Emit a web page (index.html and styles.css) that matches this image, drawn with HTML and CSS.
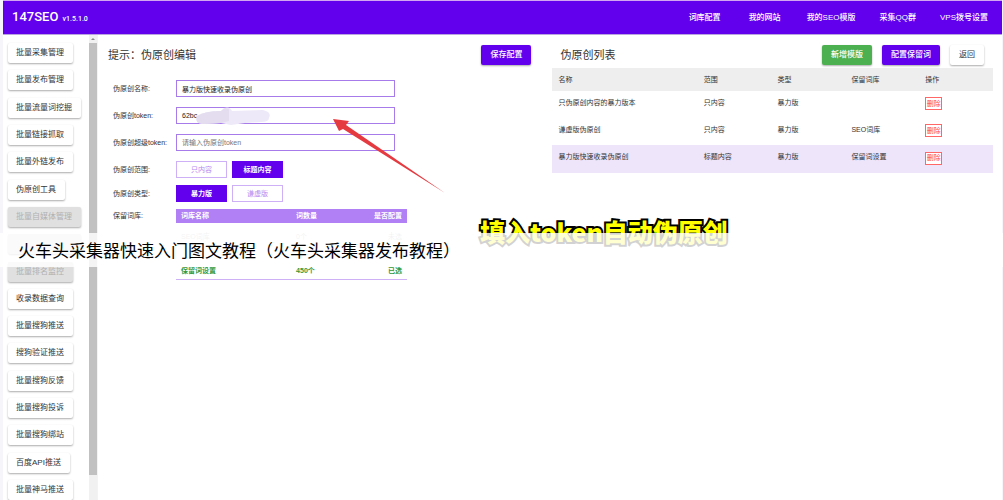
FILE: index.html
```html
<!DOCTYPE html>
<html lang="zh-CN">
<head>
<meta charset="utf-8">
<title>147SEO</title>
<link rel="stylesheet" href="styles.css">
</head>
<body>
<div class="app">
  <header class="topbar">
    <div class="brand">147SEO <small class="version">v1.5.1.0</small></div>
    <nav class="topnav">
      <a href="#">词库配置</a>
      <a href="#">我的网站</a>
      <a href="#">我的SEO模版</a>
      <a href="#">采集QQ群</a>
      <a href="#">VPS拨号设置</a>
    </nav>
  </header>
  <div class="body">
    <aside class="sidebar">
      <nav class="menu">
        <button class="btn">批量采集管理</button>
        <button class="btn">批量发布管理</button>
        <button class="btn">批量流量词挖掘</button>
        <button class="btn">批量链接抓取</button>
        <button class="btn">批量外链发布</button>
        <button class="btn">伪原创工具</button>
        <button class="btn" disabled>批量自媒体管理</button>
        <button class="btn blank" disabled></button>
        <button class="btn" disabled>批量排名监控</button>
        <button class="btn">收录数据查询</button>
        <button class="btn">批量搜狗推送</button>
        <button class="btn">搜狗验证推送</button>
        <button class="btn">批量搜狗反馈</button>
        <button class="btn">批量搜狗投诉</button>
        <button class="btn">批量搜狗绑站</button>
        <button class="btn">百度API推送</button>
        <button class="btn">批量神马推送</button>
      </nav>
      <div class="scrollbar">
        <svg class="scroll-up" viewBox="0 0 8 8"><path d="M2 5 4 3 6 5Z"/></svg>
        <div class="thumb"></div>
      </div>
    </aside>
    <section class="editor">
      <div class="panel-head">
        <h2>提示：伪原创编辑</h2>
        <button class="btn btn-primary">保存配置</button>
      </div>
      <form class="form">
        <label for="name">伪原创名称:</label>
        <input id="name" type="text" value="暴力版快速收录伪原创">
        <label for="token">伪原创token:</label>
        <div class="token-field">
          <input id="token" type="text" value="62bc">
          <svg class="smudge" viewBox="0 0 80 20">
            <path d="M4 9Q12 4 28 4L31 1Q37-1 39 4L70 3Q79 5 76 11Q76 15 68 15L52 16 38 18 28 16 10 17Q1 16 4 9Z" fill="#eee9f8"/>
            <path d="M4 9Q12 4 28 4L32 1 36 2V14L28 16 10 17Q1 16 4 9Z" fill="#e3ddef"/>
          </svg>
        </div>
        <label for="super">伪原创超级token:</label>
        <input id="super" type="text" placeholder="请输入伪原创token">
        <span>伪原创范围:</span>
        <div class="choices">
          <button type="button" class="choice">只内容</button>
          <button type="button" class="choice selected">标题内容</button>
        </div>
        <span>伪原创类型:</span>
        <div class="choices">
          <button type="button" class="choice selected">暴力版</button>
          <button type="button" class="choice">谦虚版</button>
        </div>
        <span class="top-label">保留词库:</span>
        <table class="words">
          <thead><tr><th>词库名称</th><th>词数量</th><th>是否配置</th></tr></thead>
          <tbody>
            <tr class="unused"><td>SEO词库</td><td>0个</td><td>未选</td></tr>
            <tr class="used"><td>保留词设置</td><td>450个</td><td>已选</td></tr>
          </tbody>
        </table>
      </form>
    </section>
    <section class="list">
      <div class="panel-head">
        <h2>伪原创列表</h2>
        <div class="actions">
          <button class="btn btn-success">新增模版</button>
          <button class="btn btn-primary">配置保留词</button>
          <button class="btn">返回</button>
        </div>
      </div>
      <table class="templates">
        <thead><tr><th class="wide">名称</th><th>范围</th><th>类型</th><th>保留词库</th><th>操作</th></tr></thead>
        <tbody>
          <tr><td>只伪原创内容的暴力版本</td><td>只内容</td><td>暴力版</td><td></td><td><button class="remove">删除</button></td></tr>
          <tr><td>谦虚版伪原创</td><td>只内容</td><td>暴力版</td><td>SEO词库</td><td><button class="remove">删除</button></td></tr>
          <tr class="active"><td>暴力版快速收录伪原创</td><td>标题内容</td><td>暴力版</td><td>保留词设置</td><td><button class="remove">删除</button></td></tr>
        </tbody>
      </table>
    </section>
  </div>
</div>
<svg class="arrow" viewBox="0 0 114 76"><path d="M1 1 17 3 14 7 113 75 11 11 7 13Z"/></svg>
<p class="caption">填入token自动伪原创</p>
<h1 class="banner">火车头采集器快速入门图文教程（火车头采集器发布教程）</h1>
</body>
</html>
```
FILE: styles.css
```css
* { box-sizing: border-box; }
body {
  margin: 0;
  position: relative;
  background: #f6f5fa;
  color: #333;
  font: 7px/10px "Liberation Sans", "Noto Sans CJK SC", sans-serif;
}
button, input { font: inherit; margin: 0; }
h1, h2, p { margin: 0; font-weight: 400; }

.app {
  min-height: 100vh;
  display: flex;
  flex-direction: column;
  padding: 0 1px 0 3px;
}
.topbar {
  display: flex;
  align-items: center;
  justify-content: space-between;
  height: 35px;
  padding: 0 2px 0 9px;
  background: #6200ee;
  border-top: 1px solid #d3a6f2;
  border-bottom: 1px solid #b9a4e0;
  color: #fff;
}
.brand { font: 500 13px/16px Roboto, sans-serif; }
.version { margin-left: 1px; font-size: 7px; }
.topnav { display: flex; }
.topnav a {
  min-width: 60px;
  padding: 0 12px;
  color: #fff;
  font-size: 8px;
  font-weight: 500;
  text-align: center;
  text-decoration: none;
}

.body { flex: 1; display: flex; background: #fff; }
.sidebar { display: flex; width: 95px; border-right: 1px solid #f3f3f5; }
.menu {
  flex: 1;
  display: flex;
  flex-direction: column;
  align-items: flex-start;
  justify-content: space-between;
  padding: 8px 0 0 5px;
}
.scrollbar { width: 8px; display: flex; flex-direction: column; background: #f1f1f1; padding-bottom: 25px; }
.scroll-up { height: 8px; fill: #888; }
.thumb { flex: 1; background: #c1c1c1; }

.btn {
  height: 20px;
  padding: 0 9px;
  border: 0;
  border-radius: 2px;
  background: #fff;
  color: #333;
  font-size: 8px;
  white-space: nowrap;
  box-shadow: 0 1px 2px #0005;
}
.menu .btn { padding: 0 9px 0 8px; }
.btn:disabled { background: #e0e0e0; color: #b0b0b0; }
.blank { min-width: 73px; }
.btn-primary { background: #6200ee; color: #fff; font-weight: 500; }
.btn-success { background: #4caf50; color: #fff; font-weight: 500; }

.panel-head { display: flex; align-items: center; justify-content: space-between; height: 20px; }
.panel-head h2 { font-size: 11px; line-height: 16px; }

.editor { flex: 1; padding: 10px 21px 0 10px; }
.form {
  display: grid;
  grid-template-columns: 63px 231px;
  align-items: center;
  padding: 15px 0 0 5px;
}
.form input {
  display: block;
  width: 219px;
  height: 17px;
  margin-bottom: 10px;
  padding: 0 5px;
  border: 1px solid #a77bea;
  border-radius: 0;
  background: #fff;
  color: #222;
}
.form label { margin-bottom: 10px; white-space: nowrap; }
.form input::placeholder { color: #777; }
.token-field { position: relative; }
.smudge { position: absolute; left: 17px; top: 0; width: 80px; height: 20px; }
.choices { display: flex; gap: 5px; margin-bottom: 7px; }
.form span { margin-bottom: 7px; }
.choice {
  width: 51px;
  height: 17px;
  padding: 0;
  border: 1px solid #cdb0f5;
  background: #fff;
  color: #b68af0;
}
.choice.selected { background: #6200ee; border-color: #6200ee; color: #fff; font-weight: 700; }
.form .top-label { align-self: start; margin-top: 2px; }

table { width: 100%; border-collapse: collapse; table-layout: fixed; }
th, td { padding: 0; text-align: left; font-weight: 400; }
.words { border-bottom: 1px solid #cdb0f5; }
.words th { height: 14px; background: #b280f5; color: #fff; font-weight: 700; }
.words th:first-child, .words td:first-child { padding-left: 5px; width: 52%; }
.words th:last-child, .words td:last-child { padding-right: 5px; text-align: right; }
.words td { height: 28px; }
.words .unused { color: #bbb; }
.words .used td { padding-top: 12px; color: #32983a; font-weight: 700; }

.list { width: 45%; padding: 10px 9px 0 0; }
.list .panel-head { padding: 0 9px 0 8px; }
.actions { display: flex; gap: 10px; }
.templates { margin-top: 3px; }
.templates th { height: 23px; background: #eee; }
.templates th, .templates td { padding-left: 6px; }
.templates td { height: 27px; padding-bottom: 4px; }
.templates .wide { width: 33%; }
.templates .active { background: #eee5fb; }
.templates .active td { height: 28px; }
.remove {
  display: block;
  width: 17px;
  height: 13px;
  margin-top: 2px;
  padding: 0;
  border: 1px solid #f66;
  background: #fff;
  color: #f44;
}

.arrow { position: absolute; left: 332px; top: 118px; width: 114px; height: 76px; fill: #e53a40; }
.caption {
  position: absolute;
  left: 480px;
  top: 213px;
  color: #ff0;
  font: 900 25px/36px "Noto Sans CJK SC", sans-serif;
  white-space: nowrap;
  -webkit-text-stroke: 4px #000;
  paint-order: stroke fill;
}
.banner {
  position: absolute;
  left: 0;
  right: 0;
  top: 233px;
  padding-left: 18px;
  background: #ffffffd2;
  color: #000;
  font: 400 17px/34px "Noto Sans CJK SC", sans-serif;
}
```
